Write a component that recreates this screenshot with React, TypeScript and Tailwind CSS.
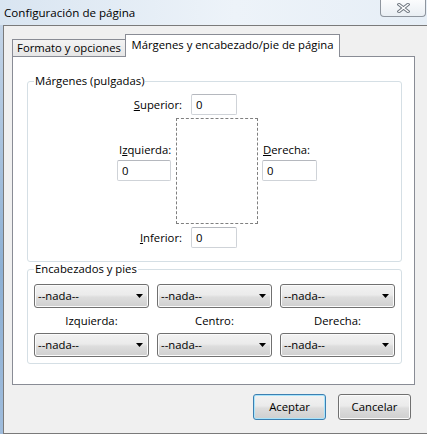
import React from "react";

function Arrow() {
  return (
    <svg width="7" height="4" viewBox="0 0 7 4" className="block">
      <polygon points="0,0 7,0 3.5,4" fill="#000" />
    </svg>
  );
}

function Select() {
  return (
    <div className="w-[115px] h-[24px] rounded-[3px] border border-[#707070] bg-[linear-gradient(#f2f2f2,#ebebeb_45%,#dddddd_55%,#cfcfcf)] shadow-[inset_0_0_0_1px_#fbfbfb] flex items-center justify-between pl-[3px] pr-[5px]">
      <span className="leading-[16px]">--nada--</span>
      <Arrow />
    </div>
  );
}

function Input() {
  return (
    <div className="h-[21px] rounded-[2px] border border-[#cfd3d8] border-t-[#b5b8be] bg-white flex items-center pl-[4px] leading-[16px]">
      0
    </div>
  );
}

function Btn({ label, def }: { label: string; def?: boolean }) {
  return (
    <div
      className={
        "w-[73px] h-[26px] rounded-[3px] border flex items-center justify-center leading-[16px] bg-[linear-gradient(#f2f2f2,#ebebeb_45%,#dddddd_55%,#cfcfcf)] " +
        (def
          ? "border-[#3c7fb1] shadow-[inset_0_0_0_1px_#a9e4fb]"
          : "border-[#707070] shadow-[inset_0_0_0_1px_#fbfbfb]")
      }
    >
      {label}
    </div>
  );
}

export default function App() {
  return (
    <div
      className="w-[427px] h-[434px] overflow-hidden flex flex-col text-black text-[11.3px] bg-[linear-gradient(90deg,#d9e5f1,#edf3f9_55%,#e6eef6)]"
      style={{ fontFamily: "'Open Sans', 'Noto Sans', sans-serif" }}
    >
      {/* Title bar */}
      <div className="h-[25px] flex items-start justify-between shrink-0">
        <div className="pl-[4px] pt-[5px] leading-[16px] text-[11.6px] text-[#000]">Configuración de página</div>
        <div className="w-[46px] h-[17px] mr-px rounded-b-[4px] border border-t-0 border-[#8e959e] bg-[linear-gradient(#fbfcfd,#e9eef3)] flex items-center justify-center">
          <svg width="13" height="10" viewBox="0 0 13 10">
            <path d="M2 1.5 L11 8.5 M11 1.5 L2 8.5" stroke="#6f7780" strokeWidth="3.4" strokeLinecap="square" />
            <path d="M2 1.5 L11 8.5 M11 1.5 L2 8.5" stroke="#ffffff" strokeWidth="1.4" strokeLinecap="square" />
          </svg>
        </div>
      </div>

      {/* Body */}
      <div className="flex flex-1">
        <div className="w-[3px] bg-[linear-gradient(#c3d4e7,#8db0d4_60%,#9fbcdc)]" />
        <div className="flex-1 bg-[#f0f0f0] border-t border-l border-b border-[#7a7a7a] pt-[8px] pl-[8px] flex flex-col">
          {/* Tabs */}
          <div className="flex items-end h-[22px] relative z-10">
            <div className="w-[113px] h-[17px] border-l border-t border-[#898c95] bg-[linear-gradient(#f3f3f3,#e6e6e6)] flex justify-center pt-[1px] leading-[14px]">
              Formato y opciones
            </div>
            <div className="w-[215px] h-[23px] -mb-px border-l border-t border-r border-[#898c95] bg-white flex justify-center pt-[2px] leading-[16px]">
              Márgenes y encabezado/pie de página
            </div>
          </div>

          {/* Panel */}
          <div className="w-[403px] border border-[#898c95] bg-white pt-[17px] pl-[14px] pb-[20px]">
            {/* Group 1 */}
            <fieldset className="w-[375px] border border-[#d5dfe5] rounded-[3px] pb-[13px]">
              <legend className="ml-[6px] px-[1px] leading-[14px]">Márgenes (pulgadas)</legend>
              <div className="mt-[6px] flex items-center">
                <div className="w-[163px] pr-[9px] text-right leading-[16px]">
                  <span className="underline">S</span>uperior:
                </div>
                <div className="w-[46px]">
                  <Input />
                </div>
              </div>
              <div className="mt-[3px] flex pl-[89px]">
                <div className="w-[54px] pt-[24px]">
                  <div className="pl-[2px] leading-[16px] mb-[2px]">
                    I<span className="underline">z</span>quierda:
                  </div>
                  <Input />
                </div>
                <div className="ml-[5px] w-[82px] h-[106px] border border-dashed border-[#7f7f7f]" />
                <div className="ml-[4px] w-[55px] pt-[24px]">
                  <div className="pl-[1px] leading-[16px] mb-[2px]">
                    <span className="underline">D</span>erecha:
                  </div>
                  <Input />
                </div>
              </div>
              <div className="mt-[3px] flex items-center">
                <div className="w-[163px] pr-[9px] text-right leading-[16px]">
                  <span className="underline">I</span>nferior:
                </div>
                <div className="w-[46px]">
                  <Input />
                </div>
              </div>
            </fieldset>

            {/* Group 2 */}
            <fieldset className="w-[375px] border border-[#d5dfe5] rounded-[3px] pb-[6px]">
              <legend className="ml-[6px] px-[1px] leading-[14px]">Encabezados y pies</legend>
              <div className="pt-[8px] px-[6px] grid grid-cols-[115px_115px_115px] gap-x-[8px]">
                <Select />
                <Select />
                <Select />
                <div className="h-[25px] flex items-center justify-center pt-[1px] leading-[16px]">Izquierda:</div>
                <div className="h-[25px] flex items-center justify-center pt-[1px] leading-[16px]">Centro:</div>
                <div className="h-[25px] flex items-center justify-center pt-[1px] leading-[16px]">Derecha:</div>
                <Select />
                <Select />
                <Select />
              </div>
            </fieldset>
          </div>

          {/* Buttons */}
          <div className="mt-[9px] flex justify-end gap-[12px] pr-[16px]">
            <Btn label="Aceptar" def />
            <Btn label="Cancelar" />
          </div>
        </div>
      </div>
    </div>
  );
}
